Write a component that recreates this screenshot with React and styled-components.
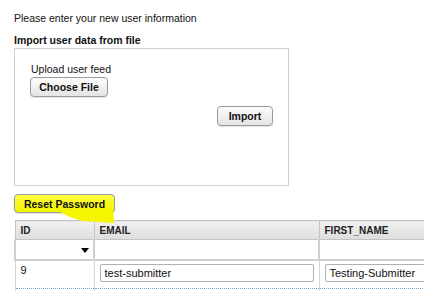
import React from "react";
import styled, { createGlobalStyle } from "styled-components";

const Global = createGlobalStyle`
  html, body {
    margin: 0;
    padding: 0;
    background: #fff;
    overflow: hidden;
  }
  body {
    font-family: "Liberation Sans", Arial, sans-serif;
    font-size: 11px;
    color: #111;
  }
`;

const Page = styled.div`
  padding: 10px 0 0 14px;
  width: 600px;
`;

const Intro = styled.p`
  margin: 0;
  line-height: 16px;
  font-size: 10.5px;
`;

const Heading = styled.h3`
  margin: 6px 0 0;
  line-height: 16px;
  font-size: 10.5px;
  font-weight: bold;
`;

const ImportBox = styled.div`
  box-sizing: border-box;
  width: 275px;
  height: 138px;
  border: 1px solid #cfcfcf;
  padding: 13px 15px 0 16px;
  display: flex;
  flex-direction: column;
`;

const Label = styled.div`
  line-height: 15px;
  font-size: 10.5px;
`;

const Button = styled.button`
  box-sizing: border-box;
  height: ${(p) => p.$h || 20}px;
  width: ${(p) => p.$w}px;
  padding: 0;
  border: 1px solid #9a9a9a;
  border-radius: 4px;
  background: ${(p) =>
    p.$highlight
      ? "linear-gradient(#ffff40, #f2f200)"
      : "linear-gradient(#fdfdfd, #e4e4e4)"};
  font-family: "Liberation Sans", Arial, sans-serif;
  font-size: 10.5px;
  font-weight: bold;
  color: #111;
  box-shadow: 0 1px 1px rgba(0, 0, 0, 0.12);
`;

const ChooseButton = styled(Button)`
  margin-left: -1px;
`;

const ImportButton = styled(Button)`
  align-self: flex-end;
  margin-top: 9px;
`;

const ResetWrap = styled.div`
  position: relative;
  margin-top: 8px;
  height: 19px;
`;

const Scribble = styled.svg`
  position: absolute;
  left: 0;
  top: 0;
  z-index: 2;
  pointer-events: none;
`;

const Table = styled.table`
  margin-top: 7px;
  border-collapse: collapse;
  table-layout: fixed;
  width: 560px;
`;

const Th = styled.th`
  box-sizing: border-box;
  width: ${(p) => p.$w}px;
  height: 19px;
  padding: 0 0 0 5px;
  text-align: left;
  font-size: 10px;
  font-weight: bold;
  color: #222;
  background: linear-gradient(#f1f1f1, #dddddd);
  border: 1px solid #c4c4c4;
`;

const FilterCell = styled.td`
  height: 19px;
  padding: 0;
  background: #fff;
  border: 2px solid #d0d0d0;
  border-top: 1px solid #c4c4c4;
  position: relative;
`;

const Arrow = styled.span`
  position: absolute;
  right: 4px;
  top: 8px;
  width: 0;
  height: 0;
  border-left: 4px solid transparent;
  border-right: 4px solid transparent;
  border-top: 5px solid #000;
`;

const Td = styled.td`
  height: 24px;
  padding: 3px 5px 0;
  vertical-align: top;
  font-size: 11px;
  border-top: 1px dotted #6fa3d6;
  border-left: 1px solid #d6d6d6;
  border-right: 1px solid #d6d6d6;
`;

const Field = styled.div`
  box-sizing: border-box;
  height: 18px;
  border: 1px solid #b0b0b0;
  border-radius: 2px;
  padding: 1px 4px;
  font-size: 11px;
  line-height: 15px;
  white-space: nowrap;
  overflow: hidden;
`;

const rows = [
  { id: "9", email: "test-submitter", first: "Testing-Submitter" },
  { id: "476743", email: "test2", first: "Testing" },
];

export default function App() {
  return (
    <Page>
      <Global />
      <Intro>Please enter your new user information</Intro>
      <Heading>Import user data from file</Heading>
      <ImportBox>
        <Label>Upload user feed</Label>
        <ChooseButton $w={78}>Choose File</ChooseButton>
        <ImportButton $w={56}>Import</ImportButton>
      </ImportBox>
      <ResetWrap>
        <Button $w={101} $h={19} $highlight>
          Reset Password
        </Button>
        <Scribble width="104" height="30" viewBox="0 0 104 30">
          <path
            d="M44 17 L99 14 L100 29 L68 27 L56 23 Z"
            fill="#f5f500"
          />
        </Scribble>
      </ResetWrap>
      <Table>
        <thead>
          <tr>
            <Th $w={79}>ID</Th>
            <Th $w={225}>EMAIL</Th>
            <Th $w={256}>FIRST_NAME</Th>
          </tr>
        </thead>
        <tbody>
          <tr>
            <FilterCell>
              <Arrow />
            </FilterCell>
            <FilterCell />
            <FilterCell />
          </tr>
          {rows.map((r) => (
            <tr key={r.id}>
              <Td>{r.id}</Td>
              <Td>
                <Field>{r.email}</Field>
              </Td>
              <Td>
                <Field>{r.first}</Field>
              </Td>
            </tr>
          ))}
        </tbody>
      </Table>
    </Page>
  );
}
